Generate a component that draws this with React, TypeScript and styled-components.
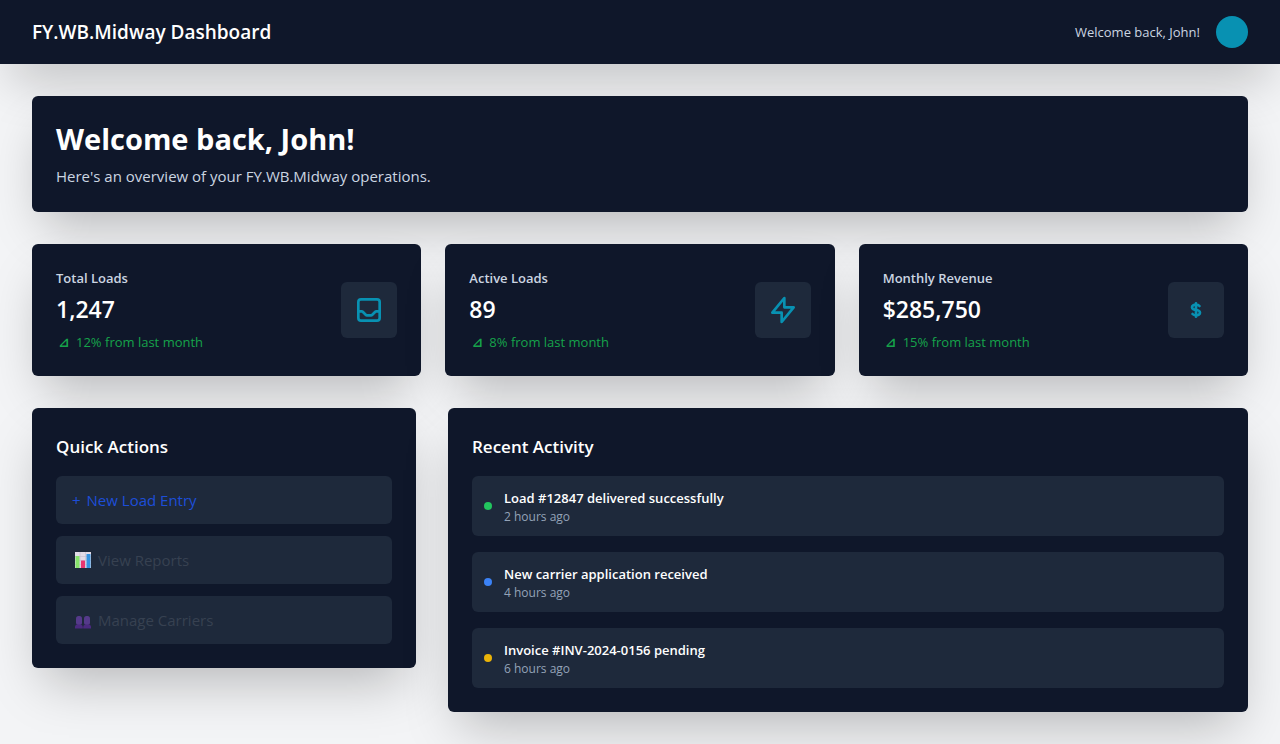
import React from "react";
import styled, { createGlobalStyle } from "styled-components";

const GlobalStyle = createGlobalStyle`
  *, *::before, *::after { box-sizing: border-box; }
  body {
    margin: 0;
    background: #f3f4f6;
    color: #ffffff;
    font-family: "Open Sans", "Noto Sans", "DejaVu Sans", sans-serif;
    font-size: 16px;
    line-height: 24px;
  }
  h1, h2, p, ul { margin: 0; padding: 0; }
`;

const shadow = "0 25px 50px -12px rgba(0, 0, 0, 0.25)";

const Header = styled.header`
  display: flex;
  align-items: center;
  justify-content: space-between;
  min-height: 64px;
  padding: 0 32px;
  background: #0f172a;
  box-shadow: ${shadow};
`;

const Brand = styled.h1`
  font-size: 19px;
  line-height: 28px;
  font-weight: 600;
`;

const UserArea = styled.div`
  display: flex;
  align-items: center;
  gap: 16px;
`;

const Greeting = styled.span`
  color: #cbd5e1;
  font-size: 13px;
  line-height: 20px;
`;

const Avatar = styled.div`
  width: 32px;
  height: 32px;
  border-radius: 50%;
  background: #0891b2;
`;

const Main = styled.main`
  display: flex;
  flex-direction: column;
  gap: 32px;
  padding: 32px;
`;

const Card = styled.section`
  padding: 24px;
  border-radius: 6px;
  background: #0f172a;
  box-shadow: ${shadow};
`;

const WelcomeTitle = styled.h2`
  margin-bottom: 6px;
  font-size: 29px;
  line-height: 38px;
  font-weight: 700;
`;

const WelcomeText = styled.p`
  color: #cbd5e1;
  font-size: 15px;
  line-height: 24px;
`;

const StatsGrid = styled.div`
  display: grid;
  grid-template-columns: repeat(3, minmax(0, 1fr));
  gap: 24px;
`;

const StatCard = styled(Card)`
  display: flex;
  align-items: center;
  justify-content: space-between;
`;

const StatLabel = styled.p`
  color: #cbd5e1;
  font-size: 13px;
  line-height: 20px;
  font-weight: 600;
`;

const StatValue = styled.p`
  margin-top: 4px;
  font-size: 23px;
  line-height: 34px;
  font-weight: 600;
`;

const StatChange = styled.p`
  display: flex;
  gap: 4px;
  margin-top: 6px;
  color: #16a34a;
  font-size: 13px;
  line-height: 20px;
`;

const TrendMark = styled.span`
  width: 16px;
  font-weight: 700;
  text-align: center;
`;

const IconBox = styled.div`
  display: flex;
  padding: 12px;
  border-radius: 6px;
  background: #1e293b;
  color: #0891b2;
`;

const StrokeIcon = styled.svg`
  width: 32px;
  height: 32px;
  fill: none;
  stroke: currentColor;
  stroke-width: 2;
  stroke-linecap: round;
  stroke-linejoin: round;
`;

const LowerGrid = styled.div`
  display: grid;
  grid-template-columns: repeat(3, minmax(0, 1fr));
  gap: 32px;
  align-items: start;
`;

const ActivityCard = styled(Card)`
  grid-column: span 2;
`;

const SectionTitle = styled.h2`
  margin-bottom: 14px;
  font-size: 17px;
  line-height: 30px;
  font-weight: 600;
`;

const ActionList = styled.div`
  display: flex;
  flex-direction: column;
  gap: 12px;
`;

const ActionButton = styled.button<{ $color: string }>`
  display: flex;
  align-items: center;
  gap: 6px;
  width: 100%;
  padding: 12px 16px;
  border: 0;
  border-radius: 6px;
  background: #1e293b;
  color: ${(p) => p.$color};
  font-family: inherit;
  font-size: 15px;
  line-height: 24px;
  text-align: left;
  cursor: pointer;
`;

const Emoji = styled.svg`
  width: 20px;
  height: 20px;
`;

const ActivityList = styled.ul`
  display: flex;
  flex-direction: column;
  gap: 16px;
  list-style: none;
`;

const ActivityItem = styled.li`
  display: flex;
  align-items: center;
  gap: 12px;
  padding: 11px 12px;
  border-radius: 6px;
  background: #1e293b;
`;

const Dot = styled.span<{ $color: string }>`
  width: 8px;
  height: 8px;
  border-radius: 50%;
  background: ${(p) => p.$color};
`;

const ActivityText = styled.p`
  font-size: 13px;
  line-height: 22px;
  font-weight: 600;
`;

const ActivityTime = styled.p`
  color: #94a3b8;
  font-size: 12px;
  line-height: 16px;
`;

const stats = [
  {
    label: "Total Loads",
    value: "1,247",
    change: "12%",
    icon: "M20 13V6a2 2 0 00-2-2H6a2 2 0 00-2 2v7m16 0v5a2 2 0 01-2 2H6a2 2 0 01-2-2v-5m16 0h-2.586a1 1 0 00-.707.293l-2.414 2.414a1 1 0 01-.707.293h-3.172a1 1 0 01-.707-.293l-2.414-2.414A1 1 0 006.586 13H4",
  },
  {
    label: "Active Loads",
    value: "89",
    change: "8%",
    icon: "M13 10V3L4 14h7v7l9-11h-7z",
  },
  {
    label: "Monthly Revenue",
    value: "$285,750",
    change: "15%",
    icon: "M12 8c-1.657 0-3 .895-3 2s1.343 2 3 2 3 .895 3 2-1.343 2-3 2m0-8c1.11 0 2.08.402 2.599 1M12 8V7m0 1v8m0 0v1m0-1c-1.11 0-2.08-.402-2.599-1",
  },
];

const activities = [
  { text: "Load #12847 delivered successfully", time: "2 hours ago", color: "#22c55e" },
  { text: "New carrier application received", time: "4 hours ago", color: "#3b82f6" },
  { text: "Invoice #INV-2024-0156 pending", time: "6 hours ago", color: "#eab308" },
];

const ChartEmoji = () => (
  <Emoji viewBox="0 0 20 20" aria-hidden="true">
    <rect x="3" y="2" width="16" height="16" fill="#e2dce8" />
    <path d="M3 6.500h16M3 10.500h16M3 14.500h16M8 2v16M13.500 2v16" stroke="#c5bdcf" strokeWidth="0.6" />
    <rect x="3.500" y="6" width="4" height="12" rx="0.500" fill="#86e36b" />
    <rect x="9" y="10.500" width="4" height="7.500" rx="0.500" fill="#e8356f" />
    <rect x="14.500" y="4" width="4" height="14" rx="0.500" fill="#3593e0" />
  </Emoji>
);

const PeopleEmoji = () => (
  <Emoji viewBox="0 0 20 20" aria-hidden="true">
    <g fill="#553a8a">
      <rect x="4" y="6" width="6" height="9" rx="2.500" />
      <rect x="12" y="6" width="6" height="9" rx="2.500" />
    </g>
    <g fill="#4b2a80">
      <path d="M3 18.500v-1.500q0-2.500 2.500-2.500h3q2.300 0 2.300 2.500v1.500z" />
      <path d="M11.200 18.500v-1.500q0-2.500 2.300-2.500h3q2.500 0 2.500 2.500v1.500z" />
    </g>
  </Emoji>
);

export default function App() {
  return (
    <>
      <GlobalStyle />
      <Header>
        <Brand>FY.WB.Midway Dashboard</Brand>
        <UserArea>
          <Greeting>Welcome back, John!</Greeting>
          <Avatar />
        </UserArea>
      </Header>
      <Main>
        <Card>
          <WelcomeTitle>Welcome back, John!</WelcomeTitle>
          <WelcomeText>Here's an overview of your FY.WB.Midway operations.</WelcomeText>
        </Card>
        <StatsGrid>
          {stats.map((s) => (
            <StatCard key={s.label}>
              <div>
                <StatLabel>{s.label}</StatLabel>
                <StatValue>{s.value}</StatValue>
                <StatChange>
                  <TrendMark>⊿</TrendMark>
                  <span>{s.change} from last month</span>
                </StatChange>
              </div>
              <IconBox>
                <StrokeIcon viewBox="0 0 24 24" aria-hidden="true">
                  <path d={s.icon} />
                </StrokeIcon>
              </IconBox>
            </StatCard>
          ))}
        </StatsGrid>
        <LowerGrid>
          <Card>
            <SectionTitle>Quick Actions</SectionTitle>
            <ActionList>
              <ActionButton $color="#1d4ed8">
                <span>+</span>
                <span>New Load Entry</span>
              </ActionButton>
              <ActionButton $color="#374151">
                <ChartEmoji />
                View Reports
              </ActionButton>
              <ActionButton $color="#374151">
                <PeopleEmoji />
                Manage Carriers
              </ActionButton>
            </ActionList>
          </Card>
          <ActivityCard>
            <SectionTitle>Recent Activity</SectionTitle>
            <ActivityList>
              {activities.map((a) => (
                <ActivityItem key={a.text}>
                  <Dot $color={a.color} />
                  <div>
                    <ActivityText>{a.text}</ActivityText>
                    <ActivityTime>{a.time}</ActivityTime>
                  </div>
                </ActivityItem>
              ))}
            </ActivityList>
          </ActivityCard>
        </LowerGrid>
      </Main>
    </>
  );
}
